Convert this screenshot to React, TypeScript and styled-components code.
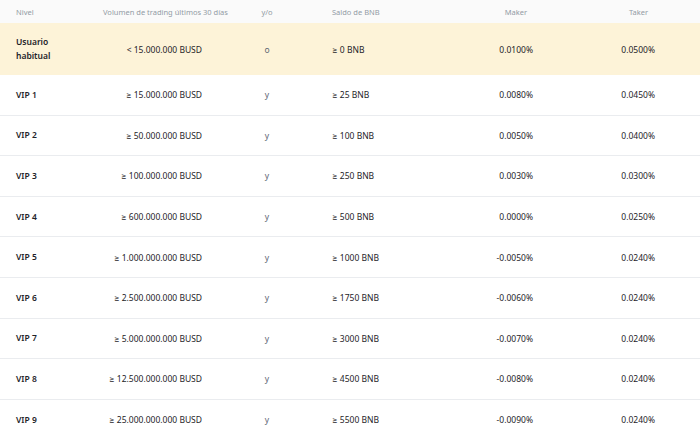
import styled, { createGlobalStyle } from "styled-components";

const Global = createGlobalStyle`
  body { margin: 0; background: #fff; font-family: "Noto Sans", Inter, sans-serif; }
`;

const rows = [
  { level: "Usuario habitual", vol: "< 15.000.000 BUSD", op: "o", bnb: "≥ 0 BNB", maker: "0.0100%", taker: "0.0500%" },
  { level: "VIP 1", vol: "≥ 15.000.000 BUSD", op: "y", bnb: "≥ 25 BNB", maker: "0.0080%", taker: "0.0450%" },
  { level: "VIP 2", vol: "≥ 50.000.000 BUSD", op: "y", bnb: "≥ 100 BNB", maker: "0.0050%", taker: "0.0400%" },
  { level: "VIP 3", vol: "≥ 100.000.000 BUSD", op: "y", bnb: "≥ 250 BNB", maker: "0.0030%", taker: "0.0300%" },
  { level: "VIP 4", vol: "≥ 600.000.000 BUSD", op: "y", bnb: "≥ 500 BNB", maker: "0.0000%", taker: "0.0250%" },
  { level: "VIP 5", vol: "≥ 1.000.000.000 BUSD", op: "y", bnb: "≥ 1000 BNB", maker: "-0.0050%", taker: "0.0240%" },
  { level: "VIP 6", vol: "≥ 2.500.000.000 BUSD", op: "y", bnb: "≥ 1750 BNB", maker: "-0.0060%", taker: "0.0240%" },
  { level: "VIP 7", vol: "≥ 5.000.000.000 BUSD", op: "y", bnb: "≥ 3000 BNB", maker: "-0.0070%", taker: "0.0240%" },
  { level: "VIP 8", vol: "≥ 12.500.000.000 BUSD", op: "y", bnb: "≥ 4500 BNB", maker: "-0.0080%", taker: "0.0240%" },
  { level: "VIP 9", vol: "≥ 25.000.000.000 BUSD", op: "y", bnb: "≥ 5500 BNB", maker: "-0.0090%", taker: "0.0240%" },
];

const Table = styled.div`
  width: 700px;
  height: 433px;
  overflow: hidden;
`;

const Row = styled.div<{ $head?: boolean; $active?: boolean; $tall?: boolean }>`
  display: grid;
  grid-template-columns: 80px 106px 130px 101px 100px 122px;
  padding: 0 45px 0 16px;
  align-items: center;
  height: ${(p) => (p.$head ? 23 : p.$tall ? 52 : 40.6)}px;
  box-sizing: border-box;
  background: ${(p) => (p.$head ? "#fafafa" : p.$active ? "#fdf3d8" : "#fff")};
  border-bottom: ${(p) => (p.$head || p.$active ? "none" : "1px solid #eaecef")};
  font-size: ${(p) => (p.$head ? 7.5 : 8.5)}px;
  color: ${(p) => (p.$head ? "#929aa5" : "#1e2329")};
`;

const Cell = styled.div<{ $align: "left" | "right" | "center" }>`
  text-align: ${(p) => p.$align};
  white-space: nowrap;
`;

const Level = styled(Cell)`
  font-weight: 600;
  white-space: normal;
  max-width: 55px;
  line-height: 14px;
`;

const VolHead = styled(Cell)`
  margin-left: -10px;
  margin-right: -20px;
  padding-left: 17px;
`;

const Soft = styled(Cell)`
  color: #5e6673;
`;

const HeadPad = styled(Cell)<{ $right?: number }>`
  padding-right: ${(p) => p.$right ?? 0}px;
`;

export default function App() {
  return (
    <Table>
      <Global />
      <Row $head>
        <Cell $align="left">Nivel</Cell>
        <VolHead $align="left">Volumen de trading últimos 30 días</VolHead>
        <Cell $align="center">y/o</Cell>
        <Cell $align="left">Saldo de BNB</Cell>
        <HeadPad $align="right" $right={6}>Maker</HeadPad>
        <HeadPad $align="right" $right={7}>Taker</HeadPad>
      </Row>
      {rows.map((r, i) => (
        <Row key={r.level} $active={i === 0} $tall={i === 0}>
          <Level $align="left">{r.level}</Level>
          <Cell $align="right">{r.vol}</Cell>
          <Soft $align="center">{r.op}</Soft>
          <Cell $align="left">{r.bnb}</Cell>
          <Cell $align="right">{r.maker}</Cell>
          <Cell $align="right">{r.taker}</Cell>
        </Row>
      ))}
    </Table>
  );
}
